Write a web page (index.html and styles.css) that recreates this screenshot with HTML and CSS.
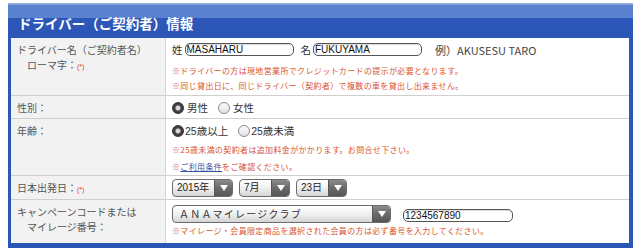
FILE: index.html
```html
<!DOCTYPE html>
<html lang="ja">
<head>
<meta charset="utf-8">
<title>ドライバー（ご契約者）情報</title>
<link rel="stylesheet" href="styles.css">
</head>
<body>
<div class="panel">
  <div class="header"><h1>ドライバー（ご契約者）情報</h1></div>
  <div class="form">
    <div class="row r1">
      <div class="label">ドライバー名（ご契約者名）<br>　ローマ字：<span class="req">(*)</span></div>
      <div class="value">
        <div class="line names">
          <span class="t">姓</span><span class="input w108">MASAHARU</span>
          <span class="t ml6">名</span><span class="input w108">FUKUYAMA</span>
          <span class="t ml12">例）AKUSESU TARO</span>
        </div>
        <p class="note n1">※ドライバーの方は現地営業所でクレジットカードの提示が必要となります。</p>
        <p class="note">※同じ貸出日に、同じドライバー（契約者）で複数の車を貸出し出来ません。</p>
      </div>
    </div>
    <div class="row r2">
      <div class="label">性別：</div>
      <div class="value">
        <div class="line">
          <span class="radio on"></span><span class="t">男性</span>
          <span class="radio ml8"></span><span class="t">女性</span>
        </div>
      </div>
    </div>
    <div class="row r3">
      <div class="label">年齢：</div>
      <div class="value">
        <div class="line">
          <span class="radio on"></span><span class="t tight">25歳以上</span>
          <span class="radio ml8"></span><span class="t tight">25歳未満</span>
        </div>
        <p class="note n3">※25歳未満の契約者は追加料金がかかります。お問合せ下さい。</p>
        <p class="note n3b">※<a href="#" class="link">ご利用条件</a>をご確認ください。</p>
      </div>
    </div>
    <div class="row r4">
      <div class="label">日本出発日：<span class="req">(*)</span></div>
      <div class="value">
        <div class="line selects">
          <span class="select s60"><span class="opt">2015年</span><span class="arrow"></span></span>
          <span class="select s50"><span class="opt">7月</span><span class="arrow"></span></span>
          <span class="select s50"><span class="opt">23日</span><span class="arrow"></span></span>
        </div>
      </div>
    </div>
    <div class="row r5">
      <div class="label">キャンペーンコードまたは<br>　マイレージ番号：</div>
      <div class="value">
        <div class="line sel-line">
          <span class="select s219"><span class="opt wide">ＡＮＡマイレージクラブ</span><span class="arrow"></span></span>
          <span class="input w110">1234567890</span>
        </div>
        <p class="note n5">※マイレージ・会員限定商品を選択された会員の方は必ず番号を入力してください。</p>
      </div>
    </div>
  </div>
</div>
</body>
</html>
```

FILE: styles.css
```css
* { box-sizing: border-box; }
html, body { margin: 0; padding: 0; background: #fff; }
body {
  font-family: "Noto Sans CJK JP", "Liberation Sans", sans-serif;
  color: #333;
}
.panel {
  margin: 3px 0 0 8px;
  width: 625px;
  border-left: 3px solid #2c56b5;
  border-right: 4px solid #2c56b5;
  border-bottom: 5px solid #2c56b5;
  background: #fff;
}
.header {
  height: 35px;
  margin: 0 -4px 0 -3px;
  padding: 0 3px;
  background: linear-gradient(to bottom, #9db3e2 0, #9db3e2 1px, #5c83cf 2px, #5a81cf 15px, #2d57b8 15px, #2c56b6 100%);
}
.header h1 {
  margin: 0;
  padding: 10px 0 0 7px;
  font-size: 13.5px;
  line-height: 20px;
  font-weight: bold;
  color: #fff;
}
.form { width: 618px; }
.row {
  display: grid;
  grid-template-columns: 155px 1fr;
  border-bottom: 1px solid #cfcfcf;
}
.row:last-child { border-bottom: 0; }
.r1 { height: 58px; }
.r2 { height: 23px; }
.r3 { height: 57px; }
.r4 { height: 24px; }
.r5 { height: 43px; }
.label {
  background: #f2f2f2;
  border-right: 1px solid #d4d4d4;
  color: #555;
  font-size: 10px;
  line-height: 15px;
  padding: 4px 0 0 6px;
}
.r2 .label, .r4 .label { padding-top: 4px; }
.req { color: #d9412a; font-size: 7px; font-family: "Liberation Sans", sans-serif; }
.value {
  padding: 3px 0 0 6px;
  font-size: 10px;
}
.line {
  display: flex;
  align-items: center;
  height: 17px;
}
.t { color: #333; font-size: 10.5px; margin-left: 3px; white-space: nowrap; }
.names .t:first-child { margin-left: 0; margin-right: 2px; }
.tight { margin-left: 1px; font-family: "Liberation Sans", "Noto Sans CJK JP", sans-serif; }
.ml6 { margin-left: 7px !important; margin-right: 2px; }
.ml8 { margin-left: 10px; }
.ml12 { margin-left: 13px !important; color: #444; font-size: 11px !important; }
.input {
  display: inline-block;
  height: 13px;
  border: 1px solid #555;
  border-radius: 5px;
  background: #fff;
  font-family: "Liberation Sans", sans-serif;
  font-size: 10px;
  line-height: 11px;
  padding-left: 1px;
  color: #111;
  box-shadow: inset 0 1px 1px rgba(0,0,0,0.15);
}
.w108 { width: 109px; }
.w110 { width: 110px; margin-left: 12px; margin-top: 3px; }
.note {
  margin: 0;
  font-size: 8px;
  letter-spacing: 0.35px;
  line-height: 15px;
  color: #d9532f;
}
.n1 { margin-top: 5px; }
.n3 { margin-top: 2px; line-height: 17px; }
.n3b { line-height: 17px; }
.n5 { margin-top: 0; }
.link { color: #3a55a6; text-decoration: underline; }
.radio {
  display: inline-block;
  width: 12px;
  height: 12px;
  border-radius: 50%;
  border: 1px solid #8a8a8a;
  background: linear-gradient(#fdfdfd, #e2e2e2);
  flex: none;
}
.radio.on {
  border-color: #333;
  background: radial-gradient(circle, #e6e6e6 0, #d0d0d0 2px, #4a4a4a 3px, #2e2e2e 6px);
}
.r2 .line, .r3 .line { margin-top: 0; }
.selects { margin-top: 0; }
.select {
  display: inline-flex;
  align-items: stretch;
  height: 18px;
  border: 1px solid #6b6b6b;
  border-radius: 4px;
  overflow: hidden;
  background: linear-gradient(#ffffff, #f0f0f0 50%, #d4d4d4);
  margin-right: 6px;
  flex: none;
}
.opt {
  flex: 1;
  font-family: "Liberation Sans", "Noto Sans CJK JP", sans-serif;
  font-size: 10px;
  line-height: 16px;
  padding-left: 4px;
  color: #222;
  white-space: nowrap;
}
.opt.wide {
  font-family: "Noto Sans CJK JP", sans-serif;
  letter-spacing: 1.2px;
  padding-left: 6px;
  color: #333;
  font-size: 10px;
}
.arrow {
  width: 18px;
  flex: none;
  position: relative;
  background: linear-gradient(#8c8c8c, #6a6a6a 50%, #555);
  border-left: 1px solid #555;
}
.arrow::after {
  content: "";
  position: absolute;
  left: 5px;
  top: 5px;
  border-left: 4px solid transparent;
  border-right: 4px solid transparent;
  border-top: 6px solid #fff;
}
.s60 { width: 61px; }
.s50 { width: 51px; }
.s219 { width: 219px; margin-right: 0; }
.sel-line { height: 19px; margin-top: 1px; }
```
